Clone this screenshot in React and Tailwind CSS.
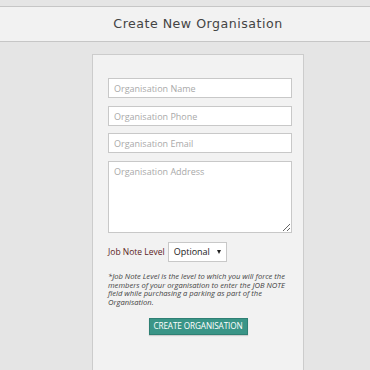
export default function App() {
  const inputCls =
    'block w-[184px] h-[20px] border border-[#c8c8c8] bg-white px-[5px] text-[9px] text-[#555] placeholder:text-[#a9a9a9] outline-none';

  return (
    <div className="min-h-[370px] w-[370px] bg-[#e5e5e5] pt-[6px] overflow-hidden" style={{ fontFamily: '"Open Sans", sans-serif' }}>
      <div className="h-[36px] border-y border-[#c6c6c6] bg-[#f2f2f2] flex items-center justify-center pl-[26px]">
        <h1 className="tracking-[0.5px] text-[#444]" style={{ fontFamily: '"DejaVu Sans", sans-serif', fontSize: '12.6px' }}>
          Create New Organisation
        </h1>
      </div>

      <div className="ml-[92px] mt-[12px] w-[212px] h-[330px] border border-[#cccccc] border-b-0 bg-[#f2f2f2] pt-[23px] pl-[15px]">
        <input className={inputCls} placeholder="Organisation Name" />
        <input className={`${inputCls} mt-[8px]`} placeholder="Organisation Phone" />
        <input className={`${inputCls} mt-[7px]`} placeholder="Organisation Email" />
        <textarea
          className="block mt-[8px] w-[184px] h-[72px] border border-[#c8c8c8] bg-white px-[5px] py-[3px] text-[9px] text-[#555] placeholder:text-[#a9a9a9] outline-none"
          placeholder="Organisation Address"
        />

        <div className="mt-[9px] flex items-center gap-[3px]">
          <span className="text-[8.5px] text-[#5a1e1e]">Job Note Level</span>
          <div className="relative w-[59px] h-[20px] border border-[#c8c8c8] bg-white flex items-center pl-[5px] text-[9px] text-[#222]">
            Optional
            <span className="absolute right-[5px] top-[7px] w-0 h-0 border-l-[2.5px] border-r-[2.5px] border-t-[4px] border-l-transparent border-r-transparent border-t-[#222]" />
          </div>
        </div>

        <p className="mt-[10px] w-[178px] text-[7.6px] leading-[8.5px] italic text-[#444]">
          *Job Note Level is the level to which you will force the members of your organisation to enter the JOB NOTE field while purchasing a parking as part of the Organisation.
        </p>

        <div className="mt-[12px] w-[180px] flex justify-center">
          <button className="h-[17px] w-[99px] bg-[#3a9587] text-white text-[8.2px] tracking-[-0.1px] whitespace-nowrap border border-[#2f8074] shadow-[0_1px_1px_rgba(0,0,0,0.15)]">
            CREATE ORGANISATION
          </button>
        </div>
      </div>
    </div>
  );
}
